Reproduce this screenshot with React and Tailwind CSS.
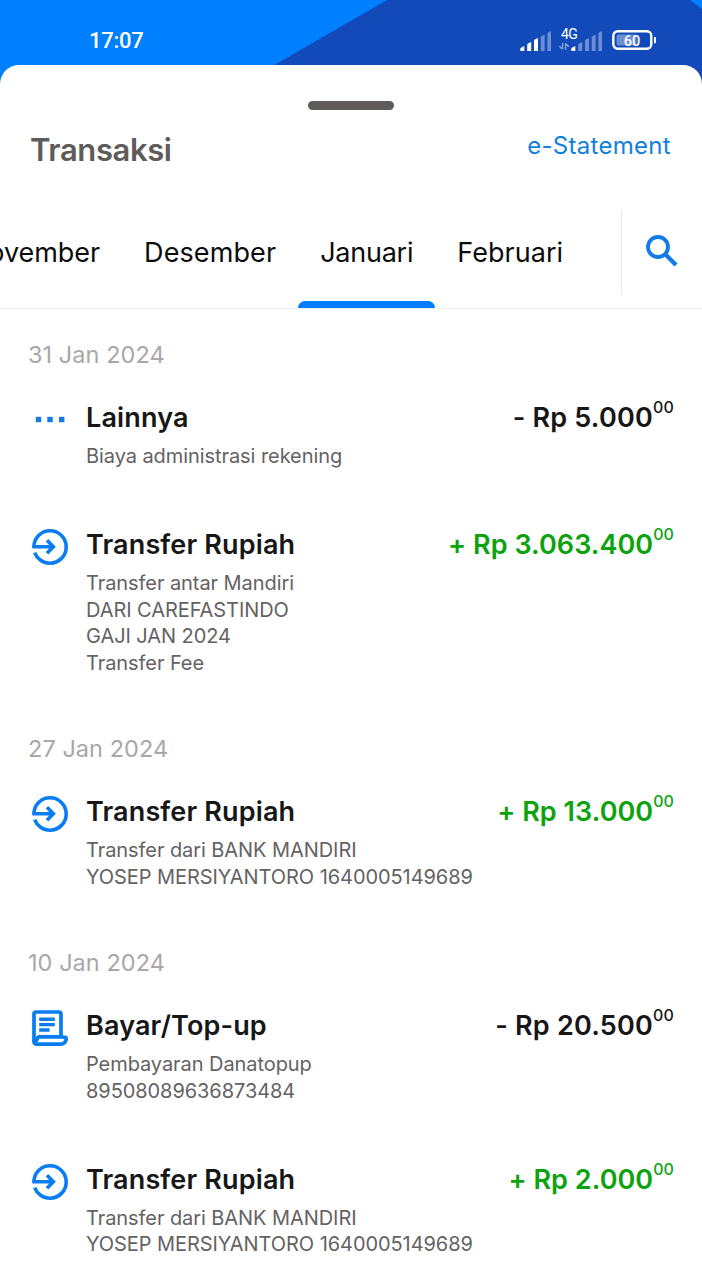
import React from "react";

const TABS = [
  { label: "November", className: "tracking-[-0.05px]" },
  { label: "Desember", className: "tracking-[0.1px]" },
  { label: "Januari", className: "tracking-[-0.25px]", active: true },
  { label: "Februari", className: "tracking-[0.05px]" },
];

const GROUPS = [
  {
    date: "31 Jan 2024",
    items: [
      {
        icon: "more",
        title: "Lainnya",
        sign: "-",
        amount: "Rp 5.000",
        lines: ["Biaya administrasi rekening"],
      },
      {
        icon: "incoming",
        title: "Transfer Rupiah",
        sign: "+",
        amount: "Rp 3.063.400",
        lines: ["Transfer antar Mandiri", "DARI CAREFASTINDO", "GAJI JAN 2024", "Transfer Fee"],
      },
    ],
  },
  {
    date: "27 Jan 2024",
    items: [
      {
        icon: "incoming",
        title: "Transfer Rupiah",
        sign: "+",
        amount: "Rp 13.000",
        lines: ["Transfer dari BANK MANDIRI", "YOSEP MERSIYANTORO 1640005149689"],
      },
    ],
  },
  {
    date: "10 Jan 2024",
    items: [
      {
        icon: "receipt",
        title: "Bayar/Top-up",
        sign: "-",
        amount: "Rp 20.500",
        lines: ["Pembayaran Danatopup", "89508089636873484"],
      },
      {
        icon: "incoming",
        title: "Transfer Rupiah",
        sign: "+",
        amount: "Rp 2.000",
        lines: ["Transfer dari BANK MANDIRI", "YOSEP MERSIYANTORO 1640005149689"],
      },
    ],
  },
];

function SignalBars({ strong }) {
  const bars = [
    "M0.3 20V17.6Q0.3 17 0.9 16.7L4.3 15V20Z",
    "M7.2 20V13.6L8 12.6L11.2 11V20Z",
    "M14 20V9.6L14.8 8.6L18 7V20Z",
    "M20.8 20V6.2L21.6 5.2L24.6 3.6V20Z",
    "M27.4 20V2.4L28.2 1.4L31 0V20Z",
  ];
  return (
    <svg className="h-5 w-[31px]" viewBox="0 0 31 20" fill="#fff">
      {bars.map((d, i) => (
        <path key={d} d={d} opacity={i < strong ? 1 : 0.38} />
      ))}
    </svg>
  );
}

function StatusBar() {
  return (
    <div className="flex h-[65px] shrink-0 items-start pl-[89px] pr-[45px] text-white">
      <span className="mt-[28px] font-['Roboto'] text-[22px] font-medium leading-[26px] tracking-[-0.25px]">17:07</span>
      <div className="ml-auto flex">
        <div className="mt-[31px]">
          <SignalBars strong={3} />
        </div>
        <div className="relative ml-[8px] mt-[31px] flex w-[43px]">
          <span className="absolute left-[2px] top-[-5px] font-['Roboto'] text-[14px] leading-4 tracking-[-0.6px]">4G</span>
          <svg className="mt-[12px] h-[7px] w-3" viewBox="0 0 12 7" fill="none" stroke="#fff" strokeWidth="1.4" opacity="0.5">
            <path d="M3.6 0V6M0.4 3.4L3.6 6.2M6.6 7V0.8L9.8 3.6" />
          </svg>
          <SignalBars strong={1} />
        </div>
        <svg className="ml-[10px] mt-[30px] h-5 w-[45px]" viewBox="0 0 45 20">
          <rect x="1.3" y="1.3" width="38" height="17.4" rx="4.4" fill="none" stroke="#fff" strokeWidth="2.4" />
          <rect x="4.6" y="4.6" width="20" height="10.8" rx="2" fill="#fff" opacity="0.38" />
          <path d="M42 7H43Q44 7 44 8.2V12Q44 13.2 43 13.2H42Z" fill="#fff" />
          <text x="20" y="15.6" fill="#fff" fontFamily="Roboto" fontSize="14.5" fontWeight="500" textAnchor="middle">60</text>
        </svg>
      </div>
    </div>
  );
}

function ItemIcon({ name }) {
  if (name === "more") {
    return (
      <svg className="size-9" viewBox="0 0 36 36" fill="#117ae3">
        <rect x="3.8" y="14.8" width="5.4" height="5.4" />
        <rect x="15.3" y="14.8" width="5.4" height="5.4" />
        <rect x="27" y="14.8" width="5.4" height="5.4" />
      </svg>
    );
  }
  if (name === "receipt") {
    return (
      <svg className="size-9" viewBox="0 0 36 36" fill="none" stroke="#087df2" strokeWidth="3.7" strokeLinejoin="round">
        <path d="M2 32V4Q2 2 4 2H27Q29 2 29 4V26.5" />
        <path d="M5 34.1Q2 34.1 2 31.5Q5.3 30.8 5.6 28Q5.8 26.8 7.2 26.8H29.5Q30.3 26.8 31 27L33.2 27.4Q34.4 27.7 34.2 29Q33.5 34.1 28.5 34.1Z" />
        <path d="M7.2 9.2H22.8M7.2 14.6H22.8M7.2 20H17.6" strokeWidth="3.4" />
      </svg>
    );
  }
  return (
    <svg className="size-9" viewBox="0 0 36 36" fill="none" stroke="#087df2" strokeWidth="3.6">
      <path d="M1.9 17.9C1.9 9 9.1 1.8 18 1.8S34.2 9 34.2 17.9S27 34.2 18 34.2C11 34.2 5 29.9 2.7 23.6" />
      <path d="M0.3 17.8H20.8M15 11.3L21.3 17.8L15 24.3" />
    </svg>
  );
}

function Transaction({ item }) {
  const amountStyle =
    item.sign === "+" ? "text-[#0ca30f] tracking-[0.05px]" : "text-[#171717] tracking-[0.2px]";
  return (
    <article className="flex pl-8 pr-[28px]">
      <div className="mt-[2px] w-[52px] shrink-0">
        <ItemIcon name={item.icon} />
      </div>
      <div className="min-w-0 flex-1 pl-[2px]">
        <div className="flex justify-between">
          <h3 className="text-[27px] font-semibold leading-9 tracking-[0.15px] text-[#171717]">{item.title}</h3>
          <p className={`flex text-[27px] font-semibold leading-9 whitespace-pre ${amountStyle}`}>
            {item.sign} {item.amount}
            <span className="-mt-[11px] text-[16px] font-medium">00</span>
          </p>
        </div>
        <div className="mt-[7px] text-[20px] leading-[26.8px] tracking-[-0.07px] text-[#646263]">
          {item.lines.map((line) => (
            <p key={line}>{line}</p>
          ))}
        </div>
      </div>
    </article>
  );
}

export default function App() {
  return (
    <div className="relative isolate flex h-[1280px] w-full flex-col overflow-hidden bg-[#007fff] font-['Inter',sans-serif]">
      <svg className="absolute left-0 top-0 -z-10 h-[90px] w-[702px]" viewBox="0 0 702 90">
        <path d="M387 0H690L702 9V90H231Z" fill="#124aba" />
      </svg>
      <StatusBar />
      <main className="flex flex-1 flex-col rounded-t-[19px] bg-white">
        <div className="mt-[36px] ml-[308px] h-[9px] w-[86px] rounded-full bg-[#5f5b5a]" />
        <header className="flex items-start justify-between pl-[30px] pr-[31px]">
          <h1 className="mt-[20px] text-[31px] font-semibold leading-10 tracking-[-0.4px] text-[#5f5b5b]">Transaksi</h1>
          <a className="mt-[20px] text-[24px] leading-8 tracking-[0.3px] text-[#117fe0]">e-Statement</a>
        </header>
        <div className="mt-[41px] flex h-[98px] border-b border-[#f0f0f0]">
          <nav className="flex w-[621px] overflow-hidden">
            <div className="-ml-[54px] flex">
              {TABS.map((tab) => (
                <div key={tab.label} className="flex flex-col px-[22px]">
                  <span className={`mt-[24px] text-[27px] leading-9 text-[#0c0c0c] ${tab.className}`}>{tab.label}</span>
                  {tab.active && <span className="-mx-[22px] mt-auto h-[7px] rounded-t-[7px] bg-[#007dfb]" />}
                </div>
              ))}
            </div>
          </nav>
          <div className="h-[83px] w-px bg-[#e8e8e8]" />
          <svg className="ml-[24px] mt-[24px] size-8" viewBox="0 0 32 32" fill="none" stroke="#117ce6" strokeWidth="3.8">
            <circle cx="12" cy="12" r="10" />
            <path d="M19.5 19.5L30 30" strokeWidth="4.2" />
          </svg>
        </div>
        <div className="flex flex-col gap-[56.2px] pt-[30px]">
          {GROUPS.map((group) => (
            <section key={group.date} className="flex flex-col">
              <h2 className="mb-[29px] pl-[28px] text-[23.5px] leading-8 tracking-[0.05px] text-[#aaa6aa]">{group.date}</h2>
              <div className="flex flex-col gap-[57px]">
                {group.items.map((item, i) => (
                  <Transaction key={i} item={item} />
                ))}
              </div>
            </section>
          ))}
        </div>
      </main>
    </div>
  );
}
